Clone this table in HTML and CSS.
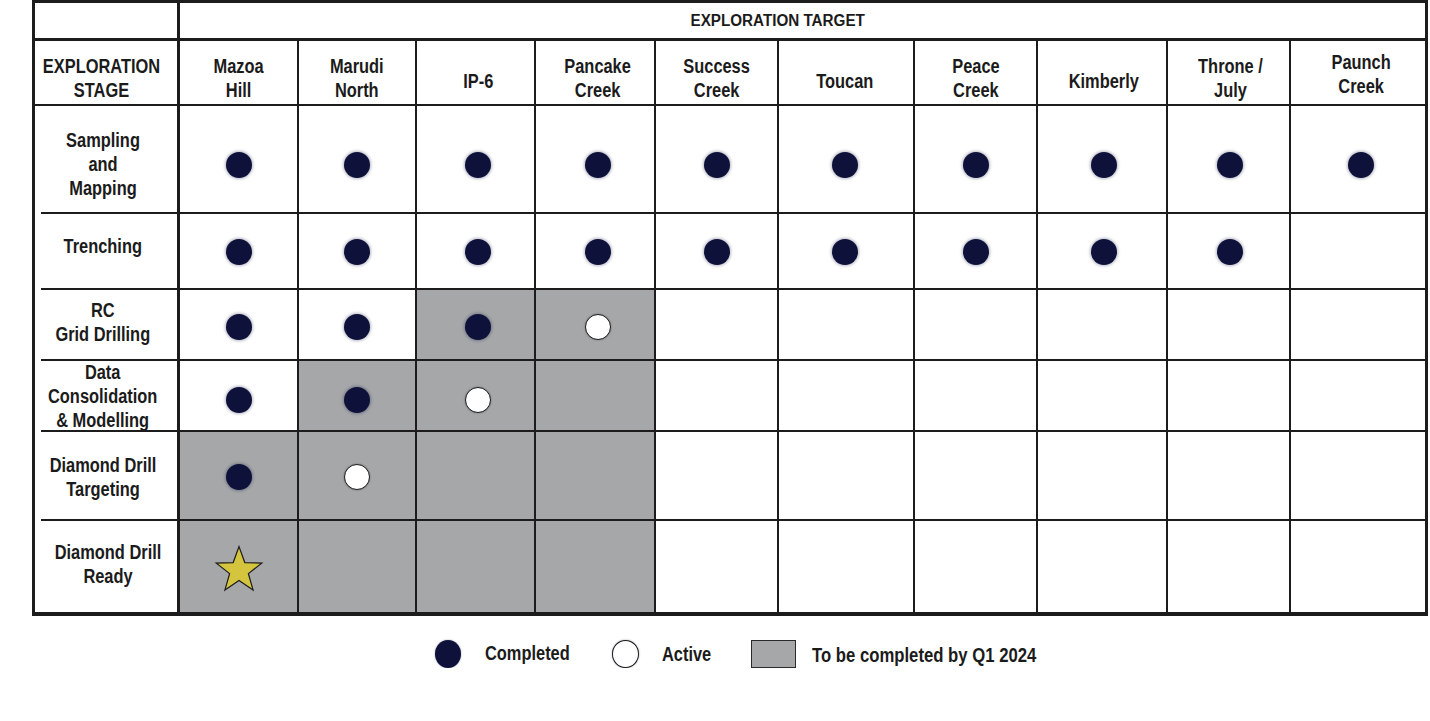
FILE: index.html
```html
<!DOCTYPE html>
<html>
<head>
<meta charset="utf-8">
<link rel="stylesheet" href="styles.css">
</head>
<body>
<div class="page">
  <div class="chart">
    <div class="cell corner"></div>
    <div class="cell target"><span class="t tt">EXPLORATION TARGET</span></div>

    <div class="row hrow">
      <div class="cell label stagehead"><span class="t">EXPLORATION<br>STAGE</span></div>
      <div class="cell head"><span class="t">Mazoa<br>Hill</span></div>
      <div class="cell head"><span class="t">Marudi<br>North</span></div>
      <div class="cell head single"><span class="t">IP-6</span></div>
      <div class="cell head"><span class="t">Pancake<br>Creek</span></div>
      <div class="cell head"><span class="t">Success<br>Creek</span></div>
      <div class="cell head single"><span class="t">Toucan</span></div>
      <div class="cell head"><span class="t">Peace<br>Creek</span></div>
      <div class="cell head single"><span class="t">Kimberly</span></div>
      <div class="cell head"><span class="t">Throne /<br>July</span></div>
      <div class="cell head high"><span class="t">Paunch<br>Creek</span></div>
    </div>

    <div class="row r-samp">
      <div class="cell label inset"><span class="t">Sampling<br>and<br>Mapping</span></div>
      <div class="cell"><span class="dot"></span></div>
      <div class="cell"><span class="dot"></span></div>
      <div class="cell"><span class="dot"></span></div>
      <div class="cell"><span class="dot"></span></div>
      <div class="cell"><span class="dot"></span></div>
      <div class="cell"><span class="dot"></span></div>
      <div class="cell"><span class="dot"></span></div>
      <div class="cell"><span class="dot"></span></div>
      <div class="cell"><span class="dot"></span></div>
      <div class="cell"><span class="dot"></span></div>
    </div>

    <div class="row r-trench">
      <div class="cell label inset"><span class="t">Trenching</span></div>
      <div class="cell"><span class="dot"></span></div>
      <div class="cell"><span class="dot"></span></div>
      <div class="cell"><span class="dot"></span></div>
      <div class="cell"><span class="dot"></span></div>
      <div class="cell"><span class="dot"></span></div>
      <div class="cell"><span class="dot"></span></div>
      <div class="cell"><span class="dot"></span></div>
      <div class="cell"><span class="dot"></span></div>
      <div class="cell"><span class="dot"></span></div>
      <div class="cell"></div>
    </div>

    <div class="row r-rc">
      <div class="cell label inset"><span class="t">RC<br>Grid Drilling</span></div>
      <div class="cell"><span class="dot"></span></div>
      <div class="cell"><span class="dot"></span></div>
      <div class="cell grey"><span class="dot"></span></div>
      <div class="cell grey"><span class="dot active"></span></div>
      <div class="cell"></div>
      <div class="cell"></div>
      <div class="cell"></div>
      <div class="cell"></div>
      <div class="cell"></div>
      <div class="cell"></div>
    </div>

    <div class="row r-data">
      <div class="cell label inset"><span class="t">Data<br>Consolidation<br>&amp; Modelling</span></div>
      <div class="cell"><span class="dot"></span></div>
      <div class="cell grey"><span class="dot"></span></div>
      <div class="cell grey"><span class="dot active"></span></div>
      <div class="cell grey"></div>
      <div class="cell"></div>
      <div class="cell"></div>
      <div class="cell"></div>
      <div class="cell"></div>
      <div class="cell"></div>
      <div class="cell"></div>
    </div>

    <div class="row r-target">
      <div class="cell label inset"><span class="t">Diamond Drill<br>Targeting</span></div>
      <div class="cell grey"><span class="dot"></span></div>
      <div class="cell grey"><span class="dot active"></span></div>
      <div class="cell grey"></div>
      <div class="cell grey"></div>
      <div class="cell"></div>
      <div class="cell"></div>
      <div class="cell"></div>
      <div class="cell"></div>
      <div class="cell"></div>
      <div class="cell"></div>
    </div>

    <div class="row r-ready">
      <div class="cell label"><span class="t">Diamond Drill<br>Ready</span></div>
      <div class="cell grey">
        <svg class="star" width="52" height="50" viewBox="0 0 50 48">
          <polygon points="25,2.5 30.58,17.81 46.87,18.39 34.03,28.44 38.52,44.11 25,35 11.48,44.11 15.97,28.44 3.13,18.39 19.42,17.81" fill="#d4c43e" stroke="#1e1e1e" stroke-width="1.2" stroke-linejoin="miter"/>
        </svg>
      </div>
      <div class="cell grey"></div>
      <div class="cell grey"></div>
      <div class="cell grey"></div>
      <div class="cell"></div>
      <div class="cell"></div>
      <div class="cell"></div>
      <div class="cell"></div>
      <div class="cell"></div>
      <div class="cell"></div>
    </div>
  </div>

  <div class="legend">
    <span class="key-dot"></span>
    <span class="key-text k-completed">Completed</span>
    <span class="key-dot key-active"></span>
    <span class="key-text k-active">Active</span>
    <span class="key-box"></span>
    <span class="key-text k-long">To be completed by Q1 2024</span>
  </div>
</div>
</body>
</html>
```

FILE: styles.css
```css
html, body {
  margin: 0;
  padding: 0;
  background: #ffffff;
}

body {
  font-family: "Liberation Sans", Arial, sans-serif;
  font-weight: bold;
  font-size: 20px;
  line-height: 24px;
  color: #1b1b1b;
}

.page {
  padding-left: 32px;
}

/* condensed look (Arial Narrow style) */
.t {
  display: inline-block;
  white-space: nowrap;
  transform: scaleX(0.82);
}

.chart {
  display: grid;
  width: fit-content;
  grid-template-columns: 145px 119px 118px 119px 120px 123px 136px 123px 130px 123px 137px;
  grid-template-rows: 38px 65px 108px 76px 71px 71px 89px 95px;
  border-top: 3px solid #1c1c1c;
  border-left: 3px solid #1c1c1c;
}

.row {
  display: contents;
}

.cell {
  box-sizing: border-box;
  border-right: 2px solid #1c1c1c;
  border-bottom: 2px solid #1c1c1c;
  display: flex;
  align-items: center;
  justify-content: center;
  text-align: center;
  background: #ffffff;
}

.row > .cell:last-child {
  border-right-width: 3px;
}

/* small per-column horizontal nudges */
.row > .cell:nth-child(4) { padding-left: 5px; }
.row > .cell:nth-child(5) { padding-left: 6px; }
.row > .cell:nth-child(7) { padding-right: 3px; }
.row > .cell:nth-child(9) { padding-left: 3px; }
.row > .cell:nth-child(10) { padding-left: 3px; }
.row > .cell:nth-child(11) { padding-left: 6px; }

.corner {
  border-right-width: 3px;
  border-bottom-width: 3px;
}

.target {
  grid-column: span 10;
  border-right-width: 3px;
  border-bottom-width: 3px;
  padding-right: 49px;
}

.t.tt {
  font-size: 16px;
  line-height: 20px;
  transform: scaleX(0.95);
}

.label {
  border-right-width: 3px;
  padding-right: 6px;
}

.label.inset {
  border-bottom: none;
  background: #ffffff linear-gradient(#1c1c1c, #1c1c1c) no-repeat right bottom / calc(100% - 6px) 2px;
}

.hrow .cell {
  padding-top: 10px;
}

.hrow .stagehead {
  padding-right: 9px;
}

.hrow .single {
  padding-top: 17px;
}

.hrow .high {
  padding-top: 2px;
}

.grey {
  background: #a5a7a9;
}

.dot {
  display: block;
  width: 26px;
  height: 26px;
  border-radius: 50%;
  background: #0e1139;
  box-shadow: 0 0 3px 1px rgba(14, 17, 57, 0.3);
}

.dot.active {
  box-sizing: border-box;
  background: #ffffff;
  border: 1.5px solid #1a1a1a;
  box-shadow: 0 0 2px rgba(0, 0, 0, 0.35);
}

.star {
  display: block;
}

/* per-row vertical offsets */
.r-samp .cell { padding-top: 12px; }
.r-samp .label { padding-top: 10px; padding-bottom: 2px; }

.r-trench .cell { padding-top: 2px; }
.r-trench .label { padding-top: 0; padding-bottom: 12px; }

.r-rc .cell { padding-top: 5px; }
.r-rc .label { padding-top: 0; padding-bottom: 7px; }

.r-data .cell { padding-top: 8px; }
.r-data .label { padding-top: 1px; padding-bottom: 2px; }

.r-target .cell { padding-top: 3px; }
.r-target .label { padding-top: 3px; padding-bottom: 2px; }

.r-ready .cell { border-bottom-width: 4px; padding-top: 5px; }
.r-ready .label { padding-top: 0; padding-bottom: 5px; padding-right: 0; padding-left: 4px; }

/* legend */
.legend {
  display: flex;
  align-items: center;
  margin: 24px 0 0 403px;
  height: 28px;
}

.key-dot {
  display: block;
  width: 26px;
  height: 28px;
  border-radius: 50%;
  background: #0e1139;
  box-shadow: 0 0 2px rgba(14, 17, 57, 0.4);
  margin-right: 24px;
}

.key-active {
  box-sizing: border-box;
  width: 27px;
  background: #ffffff;
  border: 1.5px solid #1a1a1a;
  margin-left: 42px;
  margin-right: 23px;
}

.key-text {
  display: block;
  white-space: nowrap;
  transform: scaleX(0.82);
  transform-origin: left center;
}

.k-completed {
  margin-right: -18.6px;
  margin-top: -3px;
}

.k-active {
  margin-right: -10.8px;
}

.key-box {
  display: block;
  box-sizing: border-box;
  width: 45px;
  height: 28px;
  background: #a5a7a9;
  border: 1px solid #2a2a2a;
  margin-left: 40px;
  margin-right: 16px;
}

.k-long {
  padding-top: 2px;
  transform: scaleX(0.835);
}
```
